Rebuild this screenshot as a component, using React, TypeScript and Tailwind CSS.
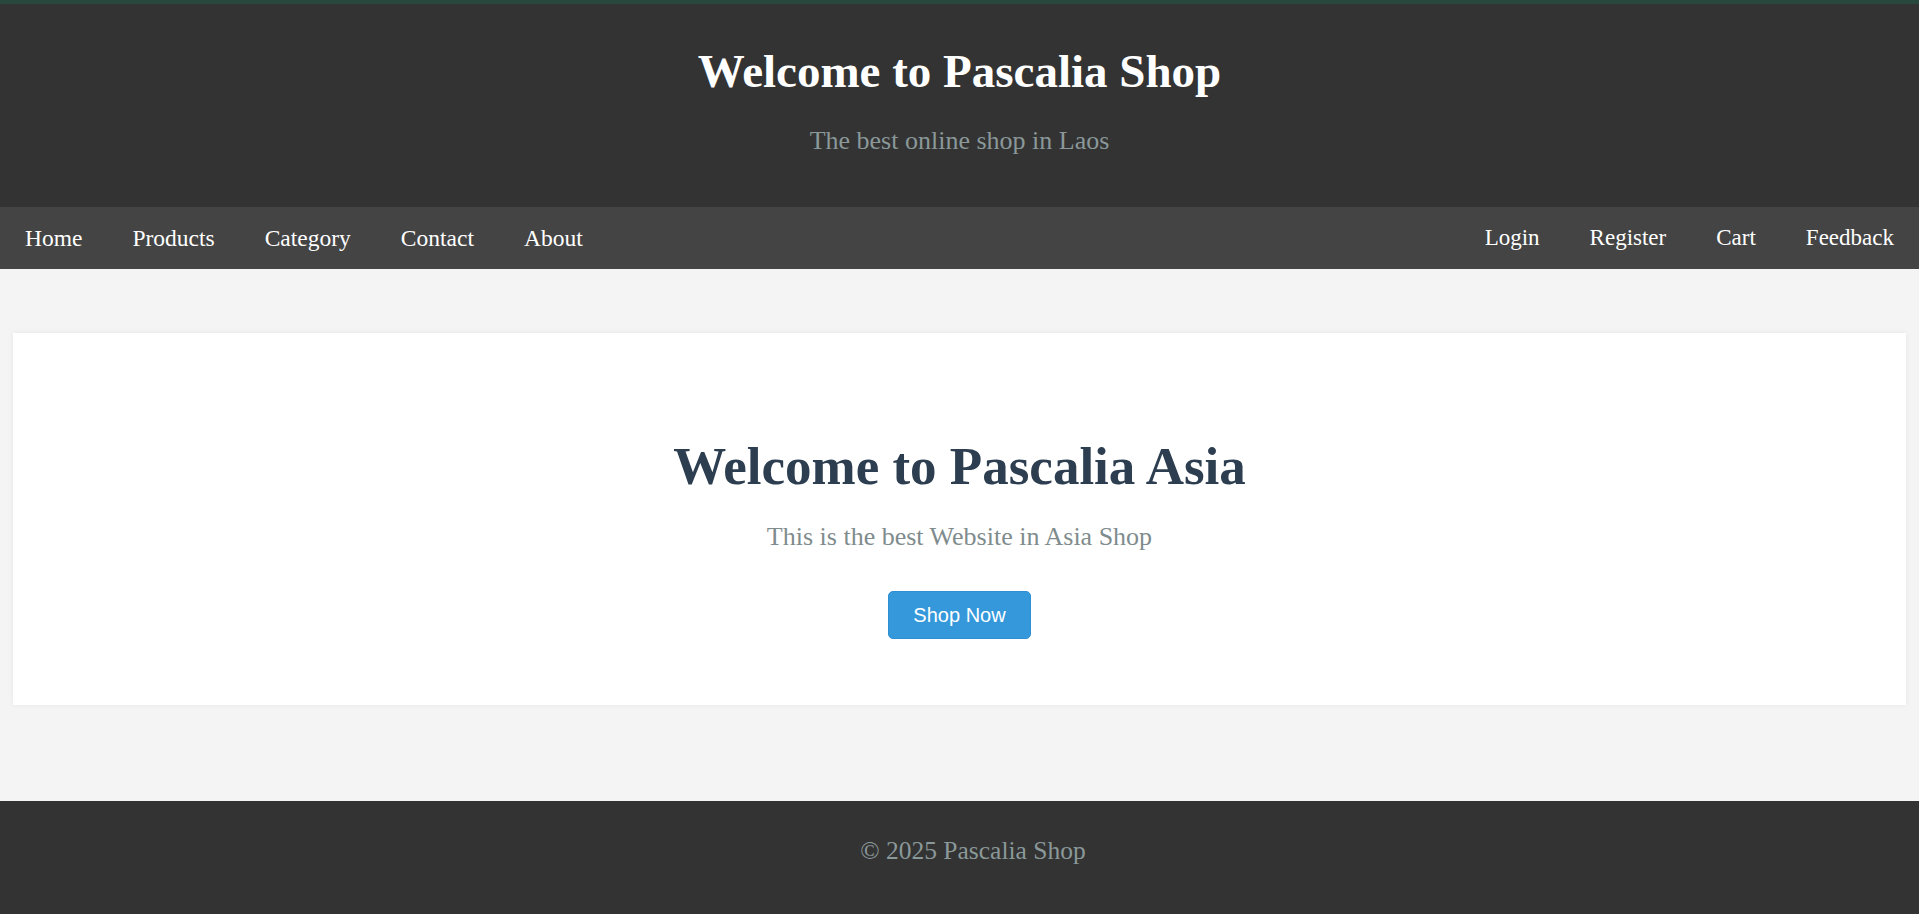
import React from 'react';

const leftLinks = ['Home', 'Products', 'Category', 'Contact', 'About'];
const rightLinks = ['Login', 'Register', 'Cart', 'Feedback'];

const serif = "font-['Liberation_Serif',serif]";

const App: React.FC = () => {
  return (
    <div className={`min-h-screen bg-[#333333] ${serif}`}>
      {/* Header */}
      <header className="border-t-4 border-[#28483d] bg-[#333333] pt-[39px] pb-[50px] text-center">
        <h1 className="text-[47px] leading-[56px] font-bold text-white">
          Welcome to Pascalia Shop
        </h1>
        <p className="mt-[26px] text-[26px] leading-[32px] text-[#8a9899]">
          The best online shop in Laos
        </p>
      </header>

      {/* Navigation */}
      <nav className="flex justify-between bg-[#444444]">
        <ul className="flex">
          {leftLinks.map((link) => (
            <li key={link}>
              <a href="#" className="block px-[25px] text-[23.5px] leading-[62px] text-white">
                {link}
              </a>
            </li>
          ))}
        </ul>
        <ul className="flex">
          {rightLinks.map((link) => (
            <li key={link}>
              <a href="#" className="block px-[25px] text-[23px] leading-[62px] text-white">
                {link}
              </a>
            </li>
          ))}
        </ul>
      </nav>

      {/* Main */}
      <main className="bg-[#f4f4f4] px-[13px] pt-[64px] pb-[96px]">
        <section className="bg-white pt-[102px] pb-[66px] text-center shadow-[0_0_6px_rgba(0,0,0,0.06)]">
          <h2 className="text-[53px] leading-[62px] font-bold text-[#2c3e50]">
            Welcome to Pascalia Asia
          </h2>
          <p className="mt-6 text-[26px] leading-[32px] text-[#7f8c8d]">
            This is the best Website in Asia Shop
          </p>
          <button className="mt-[38px] rounded-[5px] border border-[#2f8fd4] bg-[#3498db] px-6 py-[11px] font-['Liberation_Sans',Arial,sans-serif] text-[20px] leading-[24px] text-white">
            Shop Now
          </button>
        </section>
      </main>

      {/* Footer */}
      <footer className="bg-[#333333] pt-[34px] pb-[46px] pl-[27px] text-center">
        <p className="text-[25.5px] leading-[32px] text-[#8a9899]">© 2025 Pascalia Shop</p>
      </footer>
    </div>
  );
};

export default App;
